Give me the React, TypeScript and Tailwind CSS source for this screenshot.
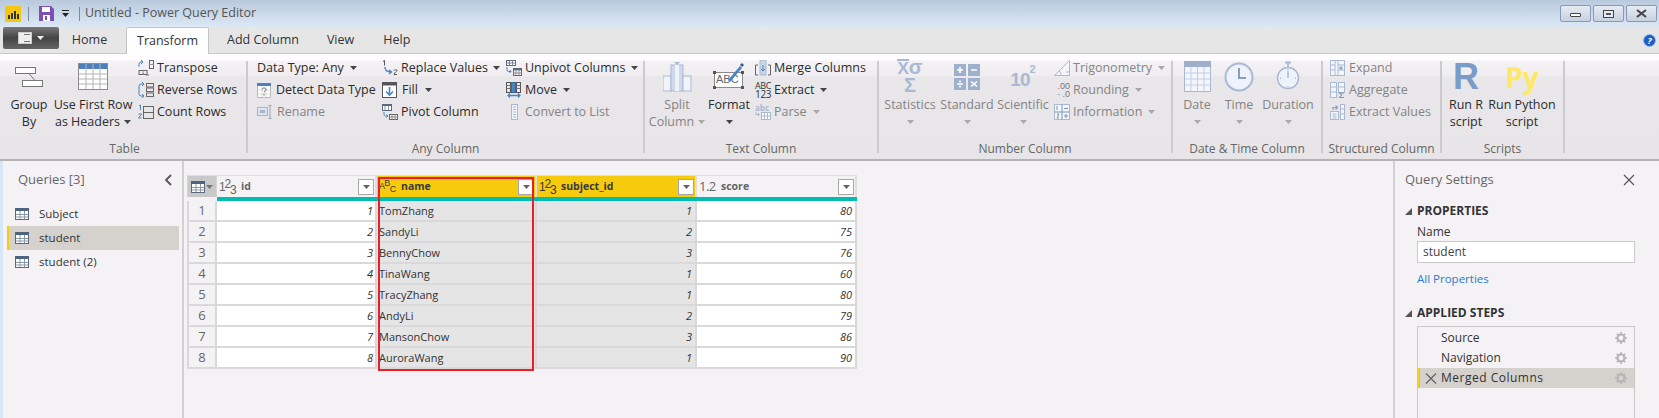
import type { ReactNode } from 'react'

const Caret = ({ color = '#444' }: { color?: string }) => (
  <svg width="7" height="4" viewBox="0 0 7 4" className="shrink-0">
    <path d="M0 0h7L3.5 4z" fill={color} />
  </svg>
)

const Ico = ({ w = 16, h = 16, children }: { w?: number; h?: number; children: ReactNode }) => (
  <svg width={w} height={h} viewBox={`0 0 ${w} ${h}`} className="shrink-0" fill="none">
    {children}
  </svg>
)

function SmallBtn({
  icon,
  label,
  caret,
  disabled,
  gap = 'gap-[3px]',
}: {
  icon?: ReactNode
  label: string
  caret?: boolean
  disabled?: boolean
  gap?: string
}) {
  return (
    <div className={`flex h-[22px] items-center whitespace-nowrap ${gap} ${disabled ? 'text-[#848484]' : 'text-[#2c2c2c]'}`}>
      {icon}
      <span>{label}</span>
      {caret && (
        <span className="ml-[3px]">
          <Caret color={disabled ? '#a8a8a8' : '#444'} />
        </span>
      )}
    </div>
  )
}

function LargeBtn({
  icon,
  lines,
  width,
  disabled,
  caret,
}: {
  icon: ReactNode
  lines: string[]
  width: string
  disabled?: boolean
  caret?: 'inline' | 'below'
}) {
  return (
    <div className={`flex flex-col items-center ${width} ${disabled ? 'text-[#848484]' : 'text-[#2c2c2c]'}`}>
      <div className="flex h-[39px] items-center justify-center">{icon}</div>
      {lines.map((l, i) => (
        <div key={l} className="flex h-[17px] items-center gap-[4px] whitespace-nowrap leading-[17px]">
          {l}
          {caret === 'inline' && i === lines.length - 1 && <Caret color={disabled ? '#a8a8a8' : '#444'} />}
        </div>
      ))}
      {caret === 'below' && (
        <div className="flex h-[17px] items-center">
          <Caret color={disabled ? '#a8a8a8' : '#444'} />
        </div>
      )}
    </div>
  )
}

function Group({ width, label, children }: { width: string; label: string; children: ReactNode }) {
  return (
    <>
      <div className={`flex flex-col pt-[3px] ${width}`}>
        <div className="flex h-[82px]">{children}</div>
        <div className="mt-[2px] h-[16px] whitespace-nowrap text-center text-[12px] leading-[16px] text-[#666]">{label}</div>
      </div>
      <div className="mt-[7px] h-[92px] w-[2px] bg-[#cbcbcb]" />
    </>
  )
}

const TableIcon = () => (
  <Ico w={14} h={12}>
    <rect x=".5" y=".5" width="13" height="11" fill="#fff" stroke="#5a6a7e" />
    <rect x="0" y="0" width="14" height="3" fill="#4d6480" />
    <path d="M5 3v8M9.500 3v8M1 6.500h12M1 9h12" stroke="#8a98a8" />
  </Ico>
)

const iconBlue = '#4a84c4'
const iconOff = '#a9b9d3'

const GridTable = () => (
  <Ico w={30} h={27}>
    <rect x=".5" y=".5" width="29" height="26" fill="#fdfdfd" stroke="#8c8c8c" />
    <rect x="1" y="1" width="28" height="5" fill="#4c7fc0" />
    <path d="M8 1v25M15 1v25M22 1v25M1 11h28M1 16h28M1 21h28" stroke="#b5b5b5" />
  </Ico>
)

const Transpose = () => (
  <Ico>
    <path d="M1 7V4a2 2 0 0 1 2-2h2M3 0 5 2 3 4" stroke={iconBlue} />
    <path d="M8 15h3M6 13l-2 2" stroke="#777" />
    <rect x="11.500" y=".5" width="4" height="8" stroke="#666" />
    <path d="M11.500 4.500h4" stroke="#999" />
    <rect x="1" y="10.500" width="8" height="4" stroke="#666" />
    <path d="M5 10.500v4" stroke="#999" />
  </Ico>
)

const ReverseRows = () => (
  <Ico>
    <path d="M6 2H3a2 2 0 0 0-2 2v8a2 2 0 0 0 2 2h3M4 0 6 2 4 4M4 12l2 2-2 2" stroke={iconBlue} />
    <rect x="8.500" y="1.500" width="7" height="3.500" stroke="#666" />
    <rect x="8.500" y="6" width="7" height="3.500" stroke="#666" />
    <rect x="8.500" y="11" width="7" height="3.500" stroke="#666" />
  </Ico>
)

const CountRows = () => (
  <Ico>
    <path d="M1 2l1.500-1v5M.5 10h3l-3 4h3" stroke={iconBlue} />
    <rect x="5.500" y="2.500" width="10" height="12" stroke="#666" />
    <path d="M5.500 8.500h10" stroke="#666" />
  </Ico>
)

const DetectType = () => (
  <Ico w={14} h={15}>
    <rect x=".5" y=".5" width="13" height="14" fill="#fff" stroke="#bbb" />
    <rect x="0" y="0" width="14" height="3" fill="#4c7fc0" />
    <path d="M5 3v11M9 3v11M1 7h12M1 11h12" stroke="#ddd" />
    <path d="M5 6.500c0-2 4-2 4 0 0 1.500-2 1.500-2 3M7 11v1.500" stroke="#666" />
  </Ico>
)

const Rename = () => (
  <Ico>
    <rect x=".5" y="3.500" width="10" height="8" fill="#dbe4f0" stroke="#a9b4c4" />
    <path d="M3 6h5v3H3z" fill="#a9b4c4" />
    <path d="M13 2v12M11.500 1.500h3M11.500 14.500h3" stroke="#9aa3b0" />
  </Ico>
)

const ReplaceValues = () => (
  <Ico w={17} h={16}>
    <path d="M1 1.500 2.500.5v5M12 10.500c0-1 3-1 3 0s-3 2-3 4h3" stroke="#555" />
    <path d="M3 7c0 4 2 5 6 5M7 10l2.500 2L7 14" stroke={iconBlue} strokeWidth="1.400" />
  </Ico>
)

const Fill = () => (
  <Ico>
    <rect x=".5" y=".5" width="14" height="15" fill="#fff" stroke="#555" />
    <rect x="0" y="0" width="15" height="3.500" fill="#555" />
    <path d="M7.500 5v8M4 9.500l3.500 3.500 3.500-3.500" stroke={iconBlue} strokeWidth="1.600" />
  </Ico>
)

const Pivot = () => (
  <Ico>
    <rect x=".5" y=".5" width="9" height="6" fill="#fff" stroke="#5b6b7f" />
    <rect x="0" y="0" width="10" height="2" fill="#5b6b7f" />
    <path d="M3 2v4M6.500 2v4" stroke="#8896a6" />
    <path d="M2 8v2.500a1.500 1.500 0 0 0 1.500 1.500H6M4.500 10.500 6 12l-1.500 1.500" stroke={iconBlue} />
    <rect x="7.500" y="10.500" width="8" height="5" fill="#fff" stroke="#666" />
    <path d="M7.500 13h8M10 10.500v5M13 10.500v5" stroke="#888" />
  </Ico>
)

const Unpivot = () => (
  <Ico>
    <rect x=".5" y=".5" width="9" height="5" fill="#fff" stroke="#5b6b7f" />
    <path d="M3.500.5v5M6.500.5v5M.5 3h9" stroke="#7a8898" />
    <path d="M1 7v3a1.500 1.500 0 0 0 1.500 1.500H5M3.500 10 5 11.500 3.500 13" stroke={iconBlue} />
    <rect x="7.500" y="8.500" width="8" height="7" fill="#fff" stroke="#666" />
    <rect x="7.500" y="8.500" width="8" height="2" fill="#5b6b7f" />
    <path d="M10 10.500v5M13 10.500v5M7.500 13h8" stroke="#888" />
  </Ico>
)

const Move = () => (
  <Ico>
    <rect x=".5" y=".5" width="4" height="10" stroke="#555" />
    <rect x="5.500" y=".5" width="4" height="10" fill={iconBlue} stroke="#38699e" />
    <rect x="10.500" y=".5" width="4" height="10" stroke="#555" />
    <path d="M.5 3.500h4M.5 6.500h4M10.500 3.500h4M10.500 6.500h4" stroke="#777" />
    <path d="M2 13.500h12M4 11.500l-2 2 2 2M12 11.500l2 2-2 2" stroke={iconBlue} strokeWidth="1.300" />
  </Ico>
)

const ConvertList = () => (
  <Ico w={8} h={16}>
    <rect x=".5" y=".5" width="6" height="15" fill="#f1f5fb" stroke={iconOff} />
    <path d="M2 3h3M2 5.500h3M2 8h3M2 10.500h3M2 13h3" stroke={iconOff} />
  </Ico>
)

const SplitColumn = () => (
  <Ico w={29} h={30}>
    <rect x="0" y="14" width="8" height="15" fill="#f1f5fb" stroke={iconOff} />
    <rect x="8" y="3" width="12" height="26" fill="#cfd9ec" stroke={iconOff} />
    <rect x="12" y="3" width="4" height="26" fill="#eef2f9" />
    <rect x="20" y="14" width="8" height="15" fill="#f1f5fb" stroke={iconOff} />
    <path d="M11 0h6l-3 3z" fill={iconOff} />
  </Ico>
)

// the ABC sits in a span so it stays real text over the pencil drawing
const Format = () => (
  <div className="relative h-[27px] w-[32px]">
    <Ico w={32} h={27}>
      <rect x="1.500" y="9.500" width="28" height="15" fill="#fff" stroke="#8a8a8a" />
      <rect x="0" y="8" width="3" height="3" fill="#555" />
      <rect x="28" y="8" width="3" height="3" fill="#555" />
      <rect x="0" y="23" width="3" height="3" fill="#555" />
      <rect x="28" y="23" width="3" height="3" fill="#555" />
    </Ico>
    <span className="absolute left-[3px] top-[10px] font-['Liberation_Sans',sans-serif] text-[11px] leading-[13px] text-[#666]">ABC</span>
    <svg width="32" height="27" viewBox="0 0 32 27" className="absolute left-0 top-0">
      <path d="M15 17 27 3l2 2-12 14z" fill={iconBlue} />
      <path d="M27 2l2-2 2 2-2 2z" fill="#2c5f99" />
    </svg>
  </div>
)

const MergeColumns = () => (
  <Ico w={16} h={16}>
    <path d="M3 5H.5v10H3M13 5h2.500v10H13" stroke="#666" />
    <rect x="5" y="0" width="6" height="15" fill="#c8d6ea" stroke={iconOff} />
    <path d="M8 5v6M6 9l2 2 2-2" stroke={iconBlue} />
  </Ico>
)

const Extract = () => (
  <div className="flex w-[16px] flex-col text-[9px] leading-[8px] text-[#333]">
    <span className="tracking-[-0.4px]">ABC</span>
    <span className="text-[10px] leading-[9px] tracking-[-0.3px]">123</span>
  </div>
)

const Parse = () => (
  <div className="flex w-[16px] flex-col">
    <span className="h-[8px] text-[8px] font-bold leading-[8px] text-[#a9b9d3]">abc</span>
    <Ico w={16} h={8}>
      <path d="M1 0v2.500h3M3 1l1.500 1.500L3 4" stroke={iconOff} />
      <rect x="6.500" y=".5" width="9" height="7" fill="#fff" stroke={iconOff} />
      <path d="M9.500 .5v7M12.500 .5v7M6.500 4h9" stroke={iconOff} />
    </Ico>
  </div>
)

const Statistics = () => (
  <div className="flex w-[28px] flex-col items-center font-['Liberation_Sans',sans-serif] text-[20px] leading-[17px] text-[#a9b9d3]">
    <span className="flex font-bold">
      <span className="border-t-2 border-[#a9b9d3] text-[17px] leading-[16px]">X</span>
      <span>σ</span>
    </span>
    <span className="font-bold">Σ</span>
  </div>
)

const Standard = () => (
  <Ico w={26} h={28}>
    <rect x="0" y="1" width="12" height="12" fill="#9fb0cc" />
    <rect x="14" y="1" width="12" height="12" fill="#9fb0cc" />
    <rect x="0" y="15" width="12" height="12" fill="#9fb0cc" />
    <rect x="14" y="15" width="12" height="12" fill="#9fb0cc" />
    <path d="M3 7h6M6 4v6M17 7h6M3 21h6M17 18.500l6 5M23 18.500l-6 5" stroke="#fff" strokeWidth="1.600" />
    <circle cx="6" cy="18.500" r="1" fill="#fff" />
    <circle cx="6" cy="23.500" r="1" fill="#fff" />
  </Ico>
)

const Scientific = () => (
  <div className="flex items-start font-['Liberation_Sans',sans-serif] font-bold text-[#a9b9d3]">
    <span className="mt-[6px] text-[19px] leading-[22px] tracking-[-1px]">10</span>
    <span className="text-[11px] leading-[12px]">2</span>
  </div>
)

const Trig = () => (
  <Ico>
    <path d="M.5 15.500 15.500.5v15z" fill="#f4f6fb" stroke={iconOff} />
    <path d="M5 11c1.500 1 2 2.500 2 4.500M12 12h3.500v3.500" stroke={iconOff} />
  </Ico>
)

const Rounding = () => (
  <div className="flex w-[16px] flex-col items-end font-['Liberation_Sans',sans-serif] text-[9px] leading-[8px] text-[#777]">
    <span>.00</span>
    <span className="flex items-center gap-[1px]">
      <span className="text-[8px] text-[#8aa0c4]">→</span>.0
    </span>
  </div>
)

const Information = () => (
  <Ico>
    <rect x=".5" y=".5" width="15" height="15" fill="#f4f6fb" stroke={iconOff} />
    <path d="M8 .5v15M.5 8h15M10 4.500h4M10 12h4M12 10v4" stroke="#7f93b6" />
    <path d="M3 2v4M3 10h2l-2 4h2" stroke="#7f93b6" />
  </Ico>
)

const DateIcon = () => (
  <Ico w={27} h={31}>
    <rect x=".5" y=".5" width="26" height="30" fill="#f3f6fb" stroke={iconOff} />
    <rect x="0" y="0" width="27" height="6" fill="#9fb0cc" />
    <path d="M7 6v24M13.500 6v24M20 6v24M1 12h25M1 18h25M1 24h25" stroke="#c4cfe2" />
  </Ico>
)

const TimeIcon = () => (
  <Ico w={30} h={30}>
    <circle cx="15" cy="15" r="13.500" fill="#eef3fb" stroke={iconOff} strokeWidth="2" />
    <path d="M15 6v10h7" stroke="#8a9dc0" strokeWidth="2" />
  </Ico>
)

const DurationIcon = () => (
  <Ico w={24} h={31}>
    <path d="M9 1.500h6M12 1.500v4" stroke={iconOff} strokeWidth="2" />
    <circle cx="12" cy="17" r="10.500" fill="#eef3fb" stroke={iconOff} strokeWidth="1.500" />
    <path d="M12 17V10M12 8v1M12 25v1M4 17h1M19 17h1" stroke="#8a9dc0" />
  </Ico>
)

const Expand = () => (
  <Ico w={15} h={16}>
    <rect x=".5" y=".5" width="14" height="15" fill="#f3f6fb" stroke={iconOff} />
    <path d="M5 .5v15M8 .5v15M.5 5h4.500M.5 10h4.500M8 5h6.500M8 10h6.500" stroke={iconOff} />
    <path d="M9 8h4M11 6v4" stroke="#7f93b6" />
  </Ico>
)

const Aggregate = () => (
  <Ico w={15} h={16}>
    <rect x=".5" y=".5" width="6" height="15" fill="#f3f6fb" stroke={iconOff} />
    <rect x="8.500" y=".5" width="6" height="10" fill="#f3f6fb" stroke={iconOff} />
    <path d="M.5 5h6M.5 10h6M8.500 5h6" stroke={iconOff} />
    <path d="M14 11H9l3 2-3 2.500h5" stroke="#7f93b6" />
  </Ico>
)

const ExtractValues = () => (
  <Ico w={15} h={16}>
    <rect x=".5" y="7.500" width="8" height="8" fill="#f3f6fb" stroke={iconOff} />
    <path d="M2.500 10h4M2.500 12h4M2.500 14h4" stroke={iconOff} />
    <rect x="10.500" y=".5" width="4" height="15" fill="#f3f6fb" stroke={iconOff} />
    <path d="M10.500 5h4M10.500 10h4" stroke={iconOff} />
    <path d="M3 6V3.500h4M5.500 1.500 7.500 3.500l-2 2" stroke="#8a9dc0" strokeWidth="1.200" />
  </Ico>
)

const FilterBtn = () => (
  <div className="flex h-[16px] w-[16px] shrink-0 items-center justify-center border border-[#a8a8a8] bg-white">
    <Caret color="#666" />
  </div>
)

const rows = [
  [1, 'TomZhang', 1, 80],
  [2, 'SandyLi', 2, 75],
  [3, 'BennyChow', 3, 76],
  [4, 'TinaWang', 1, 60],
  [5, 'TracyZhang', 1, 80],
  [6, 'AndyLi', 2, 79],
  [7, 'MansonChow', 3, 86],
  [8, 'AuroraWang', 1, 90],
]

const Int = () => (
  <span className="flex items-center font-['Liberation_Sans',sans-serif] text-[12px] leading-none tracking-[-1.2px]">
    1<span className="relative top-[-3px]">2</span>
    <span className="relative top-[3px]">3</span>
  </span>
)

function HeaderCell({ width, type, label, active }: { width: string; type: ReactNode; label: string; active?: boolean }) {
  return (
    <div
      className={`flex h-full items-center border-r-2 border-[#e0dde0] pl-[2px] pr-[1px] ${width} ${
        active ? 'bg-[#f7cb0d] text-[#3a3a3a]' : 'bg-[#f5f2f6] text-[#666]'
      }`}
    >
      <span className="flex w-[22px] shrink-0 items-center">{type}</span>
      <span className="flex-1 text-[10.500px] font-bold">{label}</span>
      <FilterBtn />
    </div>
  )
}

const GearIcon = () => (
  <svg width="12" height="12" viewBox="0 0 12 12">
    <circle cx="6" cy="6" r="3.500" fill="none" stroke="#b5b5b5" strokeWidth="2.200" />
    <path d="M6 0v2.500M6 9.500V12M0 6h2.500M9.500 6H12M1.800 1.800l1.800 1.800M8.400 8.400l1.800 1.800M10.200 1.800 8.400 3.600M3.600 8.400l-1.800 1.800" stroke="#b5b5b5" strokeWidth="1.600" />
  </svg>
)

function WinBtn({ children }: { children: ReactNode }) {
  return (
    <div className="flex h-[17px] w-[31px] items-center justify-center rounded-[2px] border border-[#8b98b8] bg-gradient-to-b from-[#e6ebf3] to-[#c6d1e0]">
      {children}
    </div>
  )
}

export default function App() {
  return (
    <div className="flex h-[418px] w-[1659px] flex-col overflow-hidden bg-[#f5f2f6] font-['Open_Sans',sans-serif] text-[12px]">
      {/* Title bar */}
      <div className="flex h-[27px] items-center bg-gradient-to-b from-[#b9cadd] to-[#dce8f5] pl-[5px] pr-[2px]">
        <svg width="16" height="16" viewBox="0 0 16 16" className="shrink-0">
          <rect width="16" height="16" rx="1" fill="#f2c811" />
          <path d="M3 9h2v4H3zM6 7h2v6H6zM9 5h2v8H9zM12 8h2v5h-2z" fill="#333" />
        </svg>
        <div className="ml-[7px] h-[14px] w-px bg-[#7f8a98]" />
        <svg width="15" height="15" viewBox="0 0 15 15" className="ml-[10px] shrink-0">
          <path d="M0 0h12l3 3v12H0z" fill="#7d4fb5" />
          <rect x="3" y="1" width="8" height="5" fill="#fff" />
          <rect x="4" y="9" width="7" height="6" fill="#fff" />
          <rect x="6" y="10" width="2" height="4" fill="#7d4fb5" />
        </svg>
        <svg width="7" height="8" viewBox="0 0 7 8" className="ml-[8px] shrink-0">
          <path d="M0 0h7v1H0zM0 3h7L3.500 7z" fill="#222" />
        </svg>
        <div className="ml-[10px] h-[14px] w-px bg-[#7f8a98]" />
        <span className="ml-[5px] text-[12.500px] text-[#555]">Untitled - Power Query Editor</span>
        <div className="ml-auto flex gap-[2px]">
          <WinBtn>
            <div className="mt-[3px] h-[4px] w-[11px] rounded-[1px] border border-[#444] bg-white" />
          </WinBtn>
          <WinBtn>
            <div className="flex h-[8px] w-[11px] items-center justify-center border border-[#444] bg-[#e6ebf3]">
              <div className="h-[2px] w-[5px] bg-[#555]" />
            </div>
          </WinBtn>
          <WinBtn>
            <svg width="11" height="9" viewBox="0 0 11 9">
              <path d="M1 1l9 7M10 1 1 8" stroke="#444" strokeWidth="2" />
            </svg>
          </WinBtn>
        </div>
      </div>

      {/* Tabs */}
      <div className="flex h-[26px] items-stretch bg-[#e6e6e6] pl-[3px] pr-[3px] text-[12.500px] text-[#333]">
        <div className="flex h-[22px] w-[56px] items-center justify-center gap-[5px] rounded-[2px] bg-gradient-to-b from-[#7a7a7a] via-[#444] to-[#666]">
          <div className="flex h-[12px] w-[14px] items-center justify-end border border-[#ccc] bg-[#eee] pr-px">
            <div className="h-[8px] w-[6px] border-y border-[#777]" />
          </div>
          <Caret color="#eee" />
        </div>
        <div className="ml-[13px] flex w-[35px] items-center justify-center">Home</div>
        <div className="z-10 ml-[19px] flex h-[27px] w-[83px] items-center justify-center rounded-t-[2px] border border-b-0 border-[#c4c4c4] bg-[#fefefe]">
          Transform
        </div>
        <div className="ml-[18px] flex items-center whitespace-nowrap">Add Column</div>
        <div className="ml-[28px] flex items-center">View</div>
        <div className="ml-[29px] flex items-center">Help</div>
        <div className="ml-auto flex items-center">
          <div className="flex h-[13px] w-[13px] items-center justify-center rounded-full border border-[#9ab8e8] bg-[#1f5fc4] text-[9px] font-bold italic leading-none text-white">
            ?
          </div>
        </div>
      </div>

      {/* Ribbon */}
      <div className="flex h-[108px] border-y border-b-2 border-t-[#c8c8c8] border-b-[#b5b3b5] bg-[linear-gradient(#fffdff_0,#fffdff_6px,#f4f2f4_7px,#efedef_22px,#e9e7e9_23px,#e7e5e7_100%)] pl-[3px] text-[12.500px]">
        <Group width="w-[243px]" label="Table">
          <LargeBtn
            width="w-[52px]"
            lines={['Group', 'By']}
            icon={
              <Ico w={28} h={20}>
                <rect x=".5" y=".5" width="20" height="6" fill="#fff" stroke="#777" />
                <rect x="7.500" y="13.500" width="20" height="6" fill="#fff" stroke="#777" />
                <path d="M14 6.500l6 7" stroke="#777" />
              </Ico>
            }
          />
          <LargeBtn width="w-[76px]" lines={['Use First Row', 'as Headers']} caret="inline" icon={<GridTable />} />
          <div className="ml-[7px] flex flex-col">
            <SmallBtn icon={<Transpose />} label="Transpose" />
            <SmallBtn icon={<ReverseRows />} label="Reverse Rows" />
            <SmallBtn icon={<CountRows />} label="Count Rows" />
          </div>
        </Group>

        <Group width="w-[395px]" label="Any Column">
          <div className="ml-[9px] flex w-[125px] flex-col">
            <SmallBtn label="Data Type: Any" caret />
            <SmallBtn icon={<DetectType />} label="Detect Data Type" gap="gap-[5px]" />
            <SmallBtn icon={<Rename />} label="Rename" disabled gap="gap-[4px]" />
          </div>
          <div className="flex w-[124px] flex-col">
            <SmallBtn icon={<ReplaceValues />} label="Replace Values" caret gap="gap-[2px]" />
            <SmallBtn icon={<Fill />} label="Fill" caret gap="gap-[4px]" />
            <SmallBtn icon={<Pivot />} label="Pivot Column" />
          </div>
          <div className="flex flex-col">
            <SmallBtn icon={<Unpivot />} label="Unpivot Columns" caret />
            <SmallBtn icon={<Move />} label="Move" caret />
            <div className="ml-[5px]">
              <SmallBtn icon={<ConvertList />} label="Convert to List" disabled gap="gap-[6px]" />
            </div>
          </div>
        </Group>

        <Group width="w-[232px]" label="Text Column">
          <LargeBtn width="w-[64px]" lines={['Split', 'Column']} caret="inline" disabled icon={<SplitColumn />} />
          <LargeBtn width="w-[40px]" lines={['Format']} caret="below" icon={<Format />} />
          <div className="ml-[6px] flex flex-col">
            <SmallBtn icon={<MergeColumns />} label="Merge Columns" />
            <SmallBtn icon={<Extract />} label="Extract" caret />
            <SmallBtn icon={<Parse />} label="Parse" caret disabled />
          </div>
        </Group>

        <Group width="w-[292px]" label="Number Column">
          <LargeBtn width="w-[62px]" lines={['Statistics']} caret="below" disabled icon={<Statistics />} />
          <LargeBtn width="w-[52px]" lines={['Standard']} caret="below" disabled icon={<Standard />} />
          <LargeBtn width="w-[60px]" lines={['Scientific']} caret="below" disabled icon={<Scientific />} />
          <div className="ml-px flex flex-col">
            <SmallBtn icon={<Trig />} label="Trigonometry" caret disabled />
            <SmallBtn icon={<Rounding />} label="Rounding" caret disabled />
            <SmallBtn icon={<Information />} label="Information" caret disabled />
          </div>
        </Group>

        <Group width="w-[148px]" label="Date & Time Column">
          <LargeBtn width="w-[48px]" lines={['Date']} caret="below" disabled icon={<DateIcon />} />
          <LargeBtn width="w-[36px]" lines={['Time']} caret="below" disabled icon={<TimeIcon />} />
          <LargeBtn width="w-[62px]" lines={['Duration']} caret="below" disabled icon={<DurationIcon />} />
        </Group>

        <Group width="w-[117px]" label="Structured Column">
          <div className="ml-[7px] flex flex-col">
            <SmallBtn icon={<Expand />} label="Expand" disabled gap="gap-[4px]" />
            <SmallBtn icon={<Aggregate />} label="Aggregate" disabled gap="gap-[4px]" />
            <SmallBtn icon={<ExtractValues />} label="Extract Values" disabled gap="gap-[4px]" />
          </div>
        </Group>

        <Group width="w-[121px]" label="Scripts">
          <LargeBtn
            width="w-[48px]"
            lines={['Run R', 'script']}
            icon={<span className="font-['Liberation_Sans',sans-serif] text-[36px] font-bold leading-[38px] text-[#7b9cc8]">R</span>}
          />
          <LargeBtn
            width="w-[64px]"
            lines={['Run Python', 'script']}
            icon={<span className="text-[28px] font-bold leading-[38px] text-[#ffe866]">Py</span>}
          />
        </Group>
      </div>

      {/* Body */}
      <div className="flex min-h-0 flex-1">
        <div className="flex w-[184px] shrink-0 flex-col border-r-2 border-[#d2d0d2]">
          <div className="flex flex-1 border-l-[3px] border-[#d6e7f7]">
            <div className="flex-1 text-[11.500px]">
              <div className="flex h-[37px] items-center justify-between pl-[15px] pr-[10px] text-[13px] text-[#666]">
                <span>Queries [3]</span>
                <svg width="8" height="12" viewBox="0 0 8 12">
                  <path d="M7 1 2 6l5 5" fill="none" stroke="#555" strokeWidth="1.800" />
                </svg>
              </div>
              <div className="ml-[4px] mt-[4px] w-[172px]">
                <div className="flex h-[24px] items-center gap-[10px] pl-[8px] text-[#333]">
                  <TableIcon />
                  Subject
                </div>
                <div className="flex h-[24px] items-center gap-[10px] border-l-[2px] border-[#f7cb0d] bg-[#d5d2cd] pl-[6px] text-[#333]">
                  <TableIcon />
                  student
                </div>
                <div className="flex h-[24px] items-center gap-[10px] pl-[8px] text-[#333]">
                  <TableIcon />
                  student (2)
                </div>
              </div>
            </div>
          </div>
        </div>

        {/* Table */}
        <div className="min-w-0 flex-1 pl-[3px] pt-[14px]">
          <div className="relative w-[670px] text-[11px] text-[#333]">
            <div className="flex h-[22px] w-[670px] border-t border-[#e0dde0]">
              <div className="flex h-full w-[30px] items-center justify-center gap-[1px] border-x border-[#d4d4d4] bg-[#c9c9c9]">
                <TableIcon />
                <Caret color="#777" />
              </div>
              <HeaderCell width="w-[160px]" type={<Int />} label="id" />
              <HeaderCell
                width="w-[160px]"
                label="name"
                active
                type={
                  <span className="flex items-center font-['Liberation_Sans',sans-serif] text-[9px] leading-none tracking-[-0.7px]">
                    A<span className="relative top-[-3px]">B</span>
                    <span className="relative top-[3px]">C</span>
                  </span>
                }
              />
              <HeaderCell width="w-[160px]" type={<Int />} label="subject_id" active />
              <HeaderCell width="w-[160px]" type={<span className="text-[13px] tracking-[-0.5px]">1.2</span>} label="score" />
            </div>
            <div className="ml-[30px] h-[4px] w-[640px] bg-[#00bdb0]" />
            {rows.map(r => (
              <div key={r[0]} className="flex h-[21px] w-[670px] border-b-2 border-[#d9d9d9]">
                <div className="flex w-[30px] items-center justify-center border-x-2 border-[#d9d9d9] pt-px text-[13px] text-[#666]">{r[0]}</div>
                <div className="flex w-[160px] items-center justify-end border-r-2 border-[#d9d9d9] bg-white pr-[2px] pt-px italic">{r[0]}</div>
                <div className="flex w-[160px] items-center border-r-2 border-[#d9d9d9] bg-[#e5e5e5] pl-[2px] pt-px">{r[1]}</div>
                <div className="flex w-[160px] items-center justify-end border-r-2 border-[#d9d9d9] bg-[#e5e5e5] pr-[3px] pt-px italic">{r[2]}</div>
                <div className="flex w-[160px] items-center justify-end border-r-2 border-[#d9d9d9] bg-white pr-[3px] pt-px italic">{r[3]}</div>
              </div>
            ))}
            <div className="absolute left-[191px] top-[2px] h-[194px] w-[156px] border-[2.500px] border-[#ee1c25]" />
          </div>
        </div>

        {/* Query settings */}
        <div className="flex w-[266px] shrink-0 flex-col border-l-2 border-[#d2d0d2] pl-[10px]">
          <div className="flex h-[37px] items-center justify-between pr-[24px] text-[13px] text-[#666]">
            <span>Query Settings</span>
            <svg width="12" height="12" viewBox="0 0 12 12">
              <path d="M1 1l10 10M11 1 1 11" stroke="#555" strokeWidth="1.200" />
            </svg>
          </div>
          <div className="mt-[3px] flex h-[20px] items-center gap-[5px] font-bold text-[#333]">
            <svg width="7" height="7" viewBox="0 0 7 7">
              <path d="M7 0v7H0z" fill="#555" />
            </svg>
            PROPERTIES
          </div>
          <div className="ml-[12px] flex h-[20px] items-center pt-px text-[#333]">Name</div>
          <div className="ml-[12px] flex h-[22px] w-[218px] items-center border border-[#c9c9c9] bg-white pl-[5px] text-[#444]">student</div>
          <div className="ml-[12px] mt-[6px] flex h-[20px] items-center text-[11.500px] text-[#2a7bc8]">All Properties</div>
          <div className="mt-[14px] flex h-[20px] items-center gap-[5px] font-bold text-[#333]">
            <svg width="7" height="7" viewBox="0 0 7 7">
              <path d="M7 0v7H0z" fill="#555" />
            </svg>
            APPLIED STEPS
          </div>
          <div className="ml-[12px] mt-[3px] min-h-0 w-[218px] flex-1 border border-b-0 border-[#c9c9c9] pt-px text-[#333]">
            {['Source', 'Navigation', 'Merged Columns'].map((s, i) => (
              <div
                key={s}
                className={`flex h-[20px] items-center pr-[7px] ${i === 2 ? 'border-l-[2px] border-[#f7cb0d] bg-[#d5d2cd]' : 'border-l-[2px] border-transparent'}`}
              >
                <span className="flex w-[21px] justify-center">
                  {i === 2 && (
                    <svg width="12" height="11" viewBox="0 0 12 11">
                      <path d="M1 .5l10 10M11 .5l-10 10" stroke="#666" strokeWidth="1.300" />
                    </svg>
                  )}
                </span>
                <span className={`flex-1 ${i === 2 ? 'tracking-[0.5px]' : ''}`}>{s}</span>
                <GearIcon />
              </div>
            ))}
          </div>
        </div>
      </div>
    </div>
  )
}
